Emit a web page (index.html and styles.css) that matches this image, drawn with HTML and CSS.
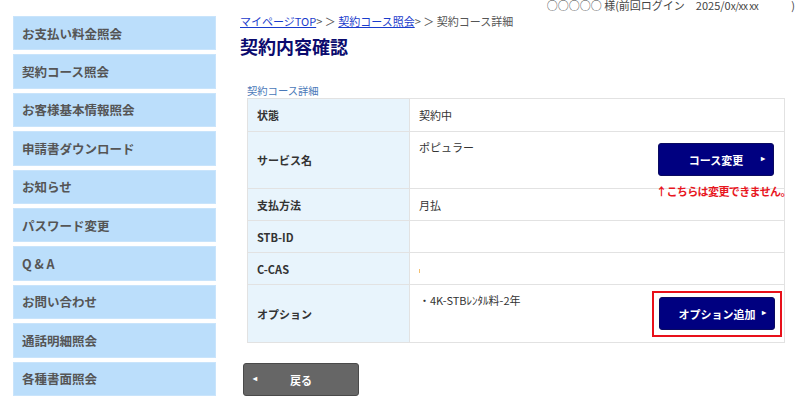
FILE: index.html
```html
<!DOCTYPE html>
<html lang="ja">
<head>
<meta charset="utf-8">
<title>契約内容確認</title>
<link rel="stylesheet" href="styles.css">
</head>
<body>
<div class="page">
  <nav class="side">
    <a class="side-item">お支払い料金照会</a>
    <a class="side-item">契約コース照会</a>
    <a class="side-item">お客様基本情報照会</a>
    <a class="side-item">申請書ダウンロード</a>
    <a class="side-item">お知らせ</a>
    <a class="side-item">パスワード変更</a>
    <a class="side-item">Q &amp; A</a>
    <a class="side-item">お問い合わせ</a>
    <a class="side-item">通話明細照会</a>
    <a class="side-item">各種書面照会</a>
  </nav>
  <main class="main">
    <div class="userbar">○○○○○ 様(前回ログイン　2025/0<span class="xs">x/xx xx</span>　　　)</div>
    <div class="crumbs"><a href="#">マイページTOP</a>&gt; ＞ <a href="#">契約コース照会</a>&gt; ＞ 契約コース詳細</div>
    <h1 class="title">契約内容確認</h1>
    <div class="caption">契約コース詳細</div>
    <table class="detail">
      <tr class="r1"><th>状態</th><td>契約中</td></tr>
      <tr class="r2"><th>サービス名</th><td><div class="cell-flex"><span>ポピュラー</span><div class="btn-wrap"><button class="btn navy">コース変更<span class="arr">▸</span></button><div class="note">↑こちらは変更できません。</div></div></div></td></tr>
      <tr class="r1"><th>支払方法</th><td>月払</td></tr>
      <tr class="r1"><th>STB-ID</th><td></td></tr>
      <tr class="r1"><th>C-CAS</th><td><span class="tick"></span></td></tr>
      <tr class="r3"><th>オプション</th><td><div class="cell-flex"><span>・4K-STBﾚﾝﾀﾙ料-2年</span><div class="hl"><button class="btn navy">オプション追加<span class="arr">▸</span></button></div></div></td></tr>
    </table>
    <button class="btn back"><span class="larr">◂</span>戻る</button>
  </main>
</div>
</body>
</html>
```
FILE: styles.css
```css
* { box-sizing: border-box; }
html, body { margin: 0; padding: 0; background: #fff; }
body {
  font-family: "Noto Sans CJK JP", "Noto Sans", sans-serif;
  color: #333;
  width: 800px;
  height: 404px;
  overflow: hidden;
}
.page { display: flex; }
.side {
  width: 216px;
  padding: 16px 0 0 13px;
  display: flex;
  flex-direction: column;
  gap: 4px;
}
.side-item {
  display: flex;
  align-items: center;
  height: 34.4px;
  background: #bbdefb;
  border: 1px solid #c9e4fb;
  padding-left: 8px;
  font-size: 12.5px;
  font-weight: bold;
  color: #555;
}
.main {
  margin-left: 24px;
  width: 550px;
  position: relative;
}
.userbar {
  height: 10px;
  line-height: 10px;
  font-size: 11px;
  color: #444;
  text-align: right;
  margin-right: -5px;
  white-space: nowrap;
  padding-top: 0;
}
.userbar .xs { font-size: 10px; letter-spacing: -0.5px; }
.crumbs {
  margin-top: 3px;
  font-size: 11px;
  line-height: 16px;
  color: #555;
}
.crumbs a { color: #1a3ccc; text-decoration: underline; }
.title {
  margin: 5px 0 0;
  font-size: 18px;
  line-height: 24px;
  color: #0b0b6e;
  font-weight: bold;
}
.caption {
  margin: 26px 0 0 7px;
  font-size: 10.3px;
  line-height: 14px;
  color: #4a78b8;
}
.detail {
  margin-left: 7px;
  width: 538px;
  border-collapse: collapse;
  font-size: 11px;
}
.detail th, .detail td {
  border: 1px solid #e2e2e2;
  text-align: left;
}
.detail th {
  width: 162px;
  background: #e8f4fc;
  font-weight: bold;
  padding: 0 9px;
  color: #333;
}
.detail td {
  padding: 0 9px;
  color: #333;
}
.r1 { height: 32px; }
.r1:first-child { height: 33px; }
.r2 { height: 57px; }
.r3 { height: 58px; }
.r2 td, .r3 td { vertical-align: top; padding-top: 0; }
.cell-flex {
  display: flex;
  justify-content: space-between;
  position: relative;
}
.cell-flex > span { padding-top: 7px; }
.btn-wrap { position: relative; margin-top: 11px; margin-right: 1px; }
.btn {
  font-family: inherit;
  font-weight: bold;
  font-size: 11px;
  color: #fff;
  border-radius: 3px;
  cursor: pointer;
}
.navy {
  width: 116px;
  height: 33px;
  background: #000080;
  border: 1px solid #0a0a60;
  padding: 0;
  display: flex;
  align-items: center;
  justify-content: center;
  position: relative;
}
.arr {
  position: absolute;
  right: 8px;
  font-size: 8px;
  top: 8px;
}
.note {
  position: absolute;
  left: -2px;
  top: 41px;
  white-space: nowrap;
  color: #e8161e;
  font-size: 11px;
  font-weight: bold;
  line-height: 14px;
  letter-spacing: -0.6px;
}
.hl {
  border: 2px solid #e8101a;
  padding: 4px 5px 5px 5px;
  margin-top: 6px;
  margin-right: -7px;
}
.tick {
  display: inline-block;
  width: 1px;
  height: 4px;
  background: #f5c070;
  vertical-align: middle;
}
.back {
  margin: 20px 0 0 3px;
  width: 116px;
  height: 33px;
  background: #666;
  border: 1px solid #4a4a4a;
  position: relative;
  padding: 0;
}
.larr {
  position: absolute;
  left: 9px;
  top: 8px;
  font-size: 8px;
}
```
